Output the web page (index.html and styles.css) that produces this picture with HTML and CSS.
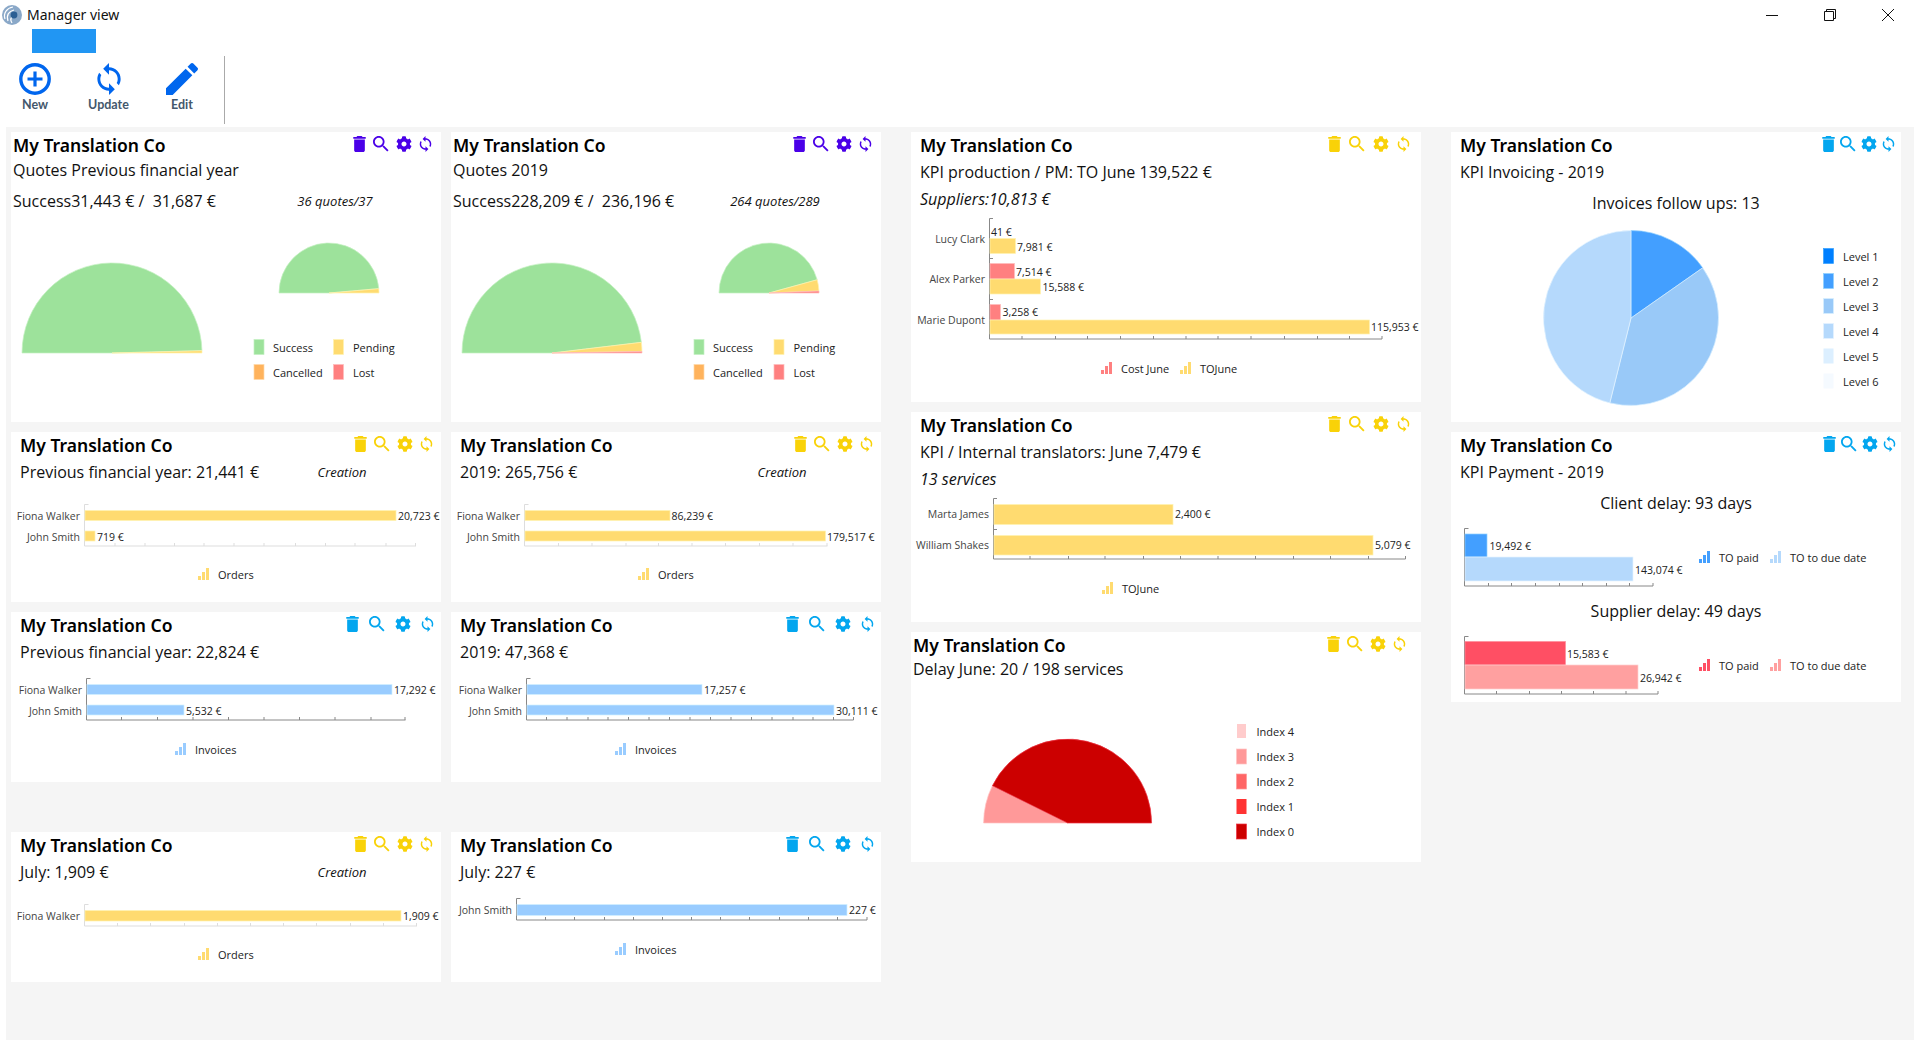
FILE: index.html
```html
<!DOCTYPE html>
<html lang="en">
<head>
    <meta charset="UTF-8">
    <title>Manager view</title>
    <link rel="stylesheet" href="styles.css">
</head>
<body>
    <svg class="icon-defs" aria-hidden="true">
        <symbol id="i-trash" viewBox="5 3 14 18"><path d="M6 19c0 1.1.9 2 2 2h8c1.1 0 2-.9 2-2V7H6v12zM19 4h-3.5l-1-1h-5l-1 1H5v2h14V4z"/></symbol>
        <symbol id="i-search" viewBox="3 3 18 18"><path d="M15.5 14h-.79l-.28-.27C15.41 12.59 16 11.11 16 9.5 16 5.91 13.09 3 9.5 3S3 5.91 3 9.5 5.91 16 9.5 16c1.61 0 3.09-.59 4.23-1.57l.27.28v.79l5 4.99L20.49 19l-4.99-5zm-6 0C7.01 14 5 11.99 5 9.5S7.01 5 9.5 5 14 7.01 14 9.5 11.99 14 9.5 14z"/></symbol>
        <symbol id="i-cog" viewBox="0 0 512 512"><path d="M487.4 315.7l-42.6-24.6c4.3-23.2 4.3-47 0-70.2l42.6-24.6c4.9-2.8 7.1-8.6 5.5-14-11.1-35.6-30-67.8-54.7-94.6-3.8-4.1-10-5.1-14.8-2.3L380.8 110c-17.9-15.4-38.5-27.3-60.8-35.1V25.8c0-5.6-3.9-10.5-9.4-11.7-36.7-8.2-74.3-7.8-109.2 0-5.5 1.2-9.4 6.1-9.4 11.7V75c-22.2 7.9-42.8 19.8-60.8 35.1L88.7 85.5c-4.9-2.8-11-1.9-14.8 2.3-24.7 26.7-43.6 58.9-54.7 94.6-1.7 5.4.6 11.2 5.5 14L67.3 221c-4.3 23.2-4.3 47 0 70.2l-42.6 24.6c-4.9 2.8-7.1 8.6-5.5 14 11.1 35.6 30 67.8 54.7 94.6 3.8 4.1 10 5.1 14.8 2.3l42.6-24.6c17.9 15.4 38.5 27.3 60.8 35.1v49.2c0 5.6 3.9 10.5 9.4 11.7 36.7 8.2 74.3 7.8 109.2 0 5.5-1.2 9.4-6.1 9.4-11.7v-49.2c22.2-7.9 42.8-19.8 60.8-35.1l42.6 24.6c4.9 2.8 11 1.9 14.8-2.3 24.7-26.7 43.6-58.9 54.7-94.6 1.5-5.5-.7-11.3-5.6-14.1zM256 336c-44.1 0-80-35.9-80-80s35.9-80 80-80 80 35.9 80 80-35.9 80-80 80z"/></symbol>
        <symbol id="i-sync" viewBox="3 1 18 22"><path d="M12 4V1L8 5l4 4V6c3.31 0 6 2.69 6 6 0 1.01-.25 1.97-.7 2.8l1.46 1.46C19.54 15.03 20 13.57 20 12c0-4.42-3.58-8-8-8zm0 14c-3.31 0-6-2.69-6-6 0-1.01.25-1.97.7-2.8L5.24 7.74C4.46 8.97 4 10.43 4 12c0 4.42 3.58 8 8 8v3l4-4-4-4v3z"/></symbol>
        <symbol id="i-edit" viewBox="3 3 18 18"><path d="M3 17.25V21h3.75L17.81 9.94l-3.75-3.75L3 17.25zM20.71 7.04c.39-.39.39-1.02 0-1.41l-2.34-2.34c-.39-.39-1.02-.39-1.41 0l-1.83 1.83 3.75 3.75 1.83-1.83z"/></symbol>
        <symbol id="i-bars" viewBox="0 0 11 12"><path d="M0 8h3v4H0zM4 4h3v8H4zM8 0h3v12H8z"/></symbol>
    </svg>

    <header class="titlebar">
        <svg class="logo" viewBox="0 0 20 20">
            <circle cx="10" cy="10" r="10" fill="#8aa8c8"/>
            <path d="M3 14C1 8 5 3 11 2M6 16C4 10 7 6 12 5M10 18c-2-3-1-6 2-8" fill="none" stroke="#fff" stroke-width="1.2"/>
            <circle cx="12" cy="10" r="3.4" fill="#2c5f94"/>
        </svg>
        <span class="titlebar-text">Manager view</span>
        <div class="window-buttons">
            <svg width="12" height="12" viewBox="0 0 12 12"><path d="M0 6.5h12" stroke="#111"/></svg>
            <svg width="12" height="12" viewBox="0 0 12 12"><path d="M.5 2.5h9v9h-9zM2.5 2.5v-2h9v9h-2" fill="none" stroke="#111"/></svg>
            <svg width="12" height="12" viewBox="0 0 12 12"><path d="M0 0l12 12M12 0L0 12" stroke="#111"/></svg>
        </div>
    </header>
    <div class="tab-marker"></div>
    <nav class="toolbar">
        <div class="tool">
            <svg width="32" height="32" viewBox="0 0 32 32"><circle cx="16" cy="16" r="14.2" fill="none" stroke="currentColor" stroke-width="3.4"/><path d="M16 8.5v15M8.5 16h15" stroke="currentColor" stroke-width="3.2"/></svg>
            <span>New</span>
        </div>
        <div class="tool">
            <svg width="32" height="32"><use href="#i-sync"/></svg>
            <span>Update</span>
        </div>
        <div class="tool">
            <svg width="32" height="32"><use href="#i-edit"/></svg>
            <span>Edit</span>
        </div>
        <div class="toolbar-sep"></div>
    </nav>

    <!-- chart viewBoxes use page pixels, so each svg starts where it sits on screen -->
    <main class="board">
        <section class="col col-small">
            <article class="card card-tight h-290">
                <div class="card-head">
                    <h2>My Translation Co</h2>
                    <div class="tools purple">
                        <svg class="ic-trash"><use href="#i-trash"/></svg><svg class="ic"><use href="#i-search"/></svg><svg class="ic"><use href="#i-cog"/></svg><svg class="ic-sync"><use href="#i-sync"/></svg>
                    </div>
                </div>
                <p class="line">Quotes Previous financial year</p>
                <div class="line-row gap-7"><p class="line lead">Success31,443 € /&nbsp; 31,687 €</p><p class="note">36 quotes/37</p></div>
                <svg class="chart" width="430" height="209" viewBox="11 213 430 209">
                    <path class="ok" d="M22 353A90 90 0 0 1 201.97 350.64L112 353Z"/>
                    <path class="pend" d="M201.97 350.64A90 90 0 0 1 202 353L112 353Z"/>
                    <path class="ok" d="M279 293A50 50 0 0 1 378.81 288.64L329 293Z"/>
                    <path class="pend" d="M378.81 288.64A50 50 0 0 1 379 293L329 293Z"/>
                    <rect class="ok" x="254" y="339.5" width="10" height="15"/><text x="273" y="347">Success</text>
                    <rect class="pend" x="333.5" y="339.5" width="10" height="15"/><text x="353" y="347">Pending</text>
                    <rect class="canc" x="254" y="364.5" width="10" height="15"/><text x="273" y="372">Cancelled</text>
                    <rect class="lost" x="333.5" y="364.5" width="10" height="15"/><text x="353" y="372">Lost</text>
                </svg>
            </article>
            <article class="card h-170">
                <div class="card-head">
                    <h2>My Translation Co</h2>
                    <div class="tools tools-orders gold">
                        <svg class="ic-trash"><use href="#i-trash"/></svg><svg class="ic"><use href="#i-search"/></svg><svg class="ic"><use href="#i-cog"/></svg><svg class="ic-sync"><use href="#i-sync"/></svg>
                    </div>
                </div>
                <div class="line-row gap-2"><p class="line lead">Previous financial year: 21,441 €</p><p class="note">Creation</p></div>
                <svg class="chart" width="430" height="118" viewBox="11 484 430 118">
                    <path class="axis-light" d="M88.5 504.5h-4v41.5h331.5M115 543v3M145 543v3M174.5 543v3M204 543v3M234 543v3M264 543v3M295.5 543v3M325.5 543v3M355 543v3M386 543v3M415.5 543v3"/>
                    <rect class="pend" x="85" y="510.5" width="311" height="10"/><rect class="pend" x="85" y="531" width="10" height="10"/>
                    <text class="name" x="80" y="516">Fiona Walker</text><text class="name" x="80" y="537">John Smith</text>
                    <text class="val" x="398" y="516">20,723 €</text><text class="val" x="97" y="537">719 €</text>
                    <use class="pend-f" href="#i-bars" x="198" y="568" width="11" height="12"/><text x="218" y="574">Orders</text>
                </svg>
            </article>
            <article class="card h-170">
                <div class="card-head">
                    <h2>My Translation Co</h2>
                    <div class="tools tools-wide blue">
                        <svg class="ic-trash"><use href="#i-trash"/></svg><svg class="ic"><use href="#i-search"/></svg><svg class="ic"><use href="#i-cog"/></svg><svg class="ic-sync"><use href="#i-sync"/></svg>
                    </div>
                </div>
                <div class="line-row gap-2"><p class="line lead">Previous financial year: 22,824 €</p></div>
                <svg class="chart" width="430" height="118" viewBox="11 664 430 118">
                    <path class="axis" d="M90.5 678.5h-4v41.5h319M121.5 717v3M157.5 717v3M193 717v3M228.5 717v3M264 717v3M299.5 717v3M335 717v3M371 717v3M405 717v3"/>
                    <rect class="inv" x="87" y="684.5" width="305" height="10"/><rect class="inv" x="87" y="705" width="97" height="10"/>
                    <text class="name" x="82" y="690">Fiona Walker</text><text class="name" x="82" y="711">John Smith</text>
                    <text class="val" x="394" y="690">17,292 €</text><text class="val" x="186" y="711">5,532 €</text>
                    <use class="inv-f" href="#i-bars" x="175" y="743" width="11" height="12"/><text x="195" y="749">Invoices</text>
                </svg>
            </article>
            <article class="card card-late h-150">
                <div class="card-head">
                    <h2>My Translation Co</h2>
                    <div class="tools tools-orders gold">
                        <svg class="ic-trash"><use href="#i-trash"/></svg><svg class="ic"><use href="#i-search"/></svg><svg class="ic"><use href="#i-cog"/></svg><svg class="ic-sync"><use href="#i-sync"/></svg>
                    </div>
                </div>
                <div class="line-row gap-2"><p class="line lead">July: 1,909 €</p><p class="note">Creation</p></div>
                <svg class="chart" width="430" height="98" viewBox="11 884 430 98">
                    <path class="axis-light" d="M88.5 904.5h-4v21.5h332.5M117.5 923v3M150.5 923v3M184.5 923v3M217.5 923v3M250.5 923v3M283.5 923v3M316.5 923v3M350.5 923v3M383.5 923v3M416.5 923v3"/>
                    <rect class="pend" x="85" y="910.5" width="316" height="10.5"/>
                    <text class="name" x="80" y="916">Fiona Walker</text>
                    <text class="val" x="403" y="916">1,909 €</text>
                    <use class="pend-f" href="#i-bars" x="198" y="948" width="11" height="12"/><text x="218" y="954">Orders</text>
                </svg>
            </article>
        </section>

        <section class="col col-small">
            <article class="card card-tight h-290">
                <div class="card-head">
                    <h2>My Translation Co</h2>
                    <div class="tools purple">
                        <svg class="ic-trash"><use href="#i-trash"/></svg><svg class="ic"><use href="#i-search"/></svg><svg class="ic"><use href="#i-cog"/></svg><svg class="ic-sync"><use href="#i-sync"/></svg>
                    </div>
                </div>
                <p class="line">Quotes 2019</p>
                <div class="line-row gap-7"><p class="line lead">Success228,209 € /&nbsp; 236,196 €</p><p class="note">264 quotes/289</p></div>
                <svg class="chart" width="430" height="209" viewBox="451 213 430 209">
                    <path class="ok" d="M462 353A90 90 0 0 1 641.37 342.34L552 353Z"/>
                    <path class="pend" d="M641.37 342.34A90 90 0 0 1 641.99 351.43L552 353Z"/>
                    <path class="lost" d="M641.99 351.43A90 90 0 0 1 642 353L552 353Z"/>
                    <path class="ok" d="M719 293A50 50 0 0 1 817.2 279.72L769 293Z"/>
                    <path class="pend" d="M817.2 279.72A50 50 0 0 1 818.96 291L769 293Z"/>
                    <path class="lost" d="M818.96 291A50 50 0 0 1 819 293L769 293Z"/>
                    <rect class="ok" x="694" y="339.5" width="10" height="15"/><text x="713" y="347">Success</text>
                    <rect class="pend" x="774" y="339.5" width="10" height="15"/><text x="793.5" y="347">Pending</text>
                    <rect class="canc" x="694" y="364.5" width="10" height="15"/><text x="713" y="372">Cancelled</text>
                    <rect class="lost" x="774" y="364.5" width="10" height="15"/><text x="793.5" y="372">Lost</text>
                </svg>
            </article>
            <article class="card h-170">
                <div class="card-head">
                    <h2>My Translation Co</h2>
                    <div class="tools tools-orders gold">
                        <svg class="ic-trash"><use href="#i-trash"/></svg><svg class="ic"><use href="#i-search"/></svg><svg class="ic"><use href="#i-cog"/></svg><svg class="ic-sync"><use href="#i-sync"/></svg>
                    </div>
                </div>
                <div class="line-row gap-2"><p class="line lead">2019: 265,756 €</p><p class="note">Creation</p></div>
                <svg class="chart" width="430" height="118" viewBox="451 484 430 118">
                    <path class="axis-light" d="M528.5 504.5h-4v41.5h303M558.5 543v3M592 543v3M626 543v3M658.5 543v3M692 543v3M725.5 543v3M759.5 543v3M793 543v3M827 543v3"/>
                    <rect class="pend" x="525" y="510.5" width="145" height="10"/><rect class="pend" x="525" y="531" width="300.5" height="10"/>
                    <text class="name" x="520" y="516">Fiona Walker</text><text class="name" x="520" y="537">John Smith</text>
                    <text class="val" x="671.5" y="516">86,239 €</text><text class="val" x="827" y="537">179,517 €</text>
                    <use class="pend-f" href="#i-bars" x="638" y="568" width="11" height="12"/><text x="658" y="574">Orders</text>
                </svg>
            </article>
            <article class="card h-170">
                <div class="card-head">
                    <h2>My Translation Co</h2>
                    <div class="tools tools-wide blue">
                        <svg class="ic-trash"><use href="#i-trash"/></svg><svg class="ic"><use href="#i-search"/></svg><svg class="ic"><use href="#i-cog"/></svg><svg class="ic-sync"><use href="#i-sync"/></svg>
                    </div>
                </div>
                <div class="line-row gap-2"><p class="line lead">2019: 47,368 €</p></div>
                <svg class="chart" width="430" height="118" viewBox="451 664 430 118">
                    <path class="axis" d="M530.5 678.5h-4v41.5h327M546.5 717v3M567 717v3M588 717v3M608 717v3M628.5 717v3M649 717v3M669.5 717v3M690 717v3M710.5 717v3M731 717v3M751.5 717v3M772 717v3M793 717v3M813 717v3M833.5 717v3M853.5 717v3"/>
                    <rect class="inv" x="527" y="684.5" width="175" height="10"/><rect class="inv" x="527" y="705" width="307" height="10"/>
                    <text class="name" x="522" y="690">Fiona Walker</text><text class="name" x="522" y="711">John Smith</text>
                    <text class="val" x="704" y="690">17,257 €</text><text class="val" x="836" y="711">30,111 €</text>
                    <use class="inv-f" href="#i-bars" x="615" y="743" width="11" height="12"/><text x="635" y="749">Invoices</text>
                </svg>
            </article>
            <article class="card card-late h-150">
                <div class="card-head">
                    <h2>My Translation Co</h2>
                    <div class="tools tools-wide blue">
                        <svg class="ic-trash"><use href="#i-trash"/></svg><svg class="ic"><use href="#i-search"/></svg><svg class="ic"><use href="#i-cog"/></svg><svg class="ic-sync"><use href="#i-sync"/></svg>
                    </div>
                </div>
                <div class="line-row gap-2"><p class="line lead">July: 227 €</p></div>
                <svg class="chart" width="430" height="98" viewBox="451 884 430 98">
                    <path class="axis" d="M520.5 898.5h-4v21.5h350.5M545.5 917v3M574.5 917v3M604.5 917v3M633.5 917v3M662.5 917v3M691.5 917v3M720.5 917v3M749.5 917v3M779.5 917v3M808.5 917v3M837.5 917v3M867 917v3"/>
                    <rect class="inv" x="517" y="904.5" width="330" height="11"/>
                    <text class="name" x="512" y="910">John Smith</text>
                    <text class="val" x="849" y="910">227 €</text>
                    <use class="inv-f" href="#i-bars" x="615" y="943" width="11" height="12"/><text x="635" y="949">Invoices</text>
                </svg>
            </article>
        </section>

        <section class="col col-mid">
            <article class="card h-270">
                <div class="card-head">
                    <h2>My Translation Co</h2>
                    <div class="tools tools-mid gold">
                        <svg class="ic-trash"><use href="#i-trash"/></svg><svg class="ic"><use href="#i-search"/></svg><svg class="ic"><use href="#i-cog"/></svg><svg class="ic-sync"><use href="#i-sync"/></svg>
                    </div>
                </div>
                <p class="line gap-2">KPI production / PM: TO June 139,522 €</p>
                <p class="line gap-3"><em>Suppliers:10,813 €</em></p>
                <svg class="chart" width="510" height="191" viewBox="911 211 510 191">
                    <path class="axis" d="M993 218.5h-3.500v120.500h392.500M989.5 258.5h3.500M989.5 299.5h3.500M1022 336v3M1055.5 336v3M1087.5 336v3M1120.5 336v3M1153.5 336v3M1186 336v3M1218 336v3M1251 336v3M1284.5 336v3M1317.5 336v3M1349.5 336v3M1382 336v3"/>
                    <rect class="pend" x="990" y="238.5" width="25.5" height="15"/>
                    <rect class="lost" x="990" y="263.5" width="24.5" height="15.5"/>
                    <rect class="pend" x="990" y="279" width="50.5" height="15"/>
                    <rect class="lost" x="990" y="304.5" width="10.5" height="15.5"/>
                    <rect class="pend" x="990" y="320" width="379.5" height="14"/>
                    <text class="name" x="985" y="239">Lucy Clark</text><text class="name" x="985" y="279">Alex Parker</text><text class="name" x="985" y="320">Marie Dupont</text>
                    <text class="val" x="991" y="232">41 €</text><text class="val" x="1017" y="247">7,981 €</text>
                    <text class="val" x="1016" y="272">7,514 €</text><text class="val" x="1042.5" y="287">15,588 €</text>
                    <text class="val" x="1002.5" y="312">3,258 €</text><text class="val" x="1371" y="327">115,953 €</text>
                    <use class="lost-f" href="#i-bars" x="1101" y="362" width="11" height="12"/><text x="1121" y="368">Cost June</text>
                    <use class="pend-f" href="#i-bars" x="1180" y="362" width="11" height="12"/><text x="1200" y="368">TOJune</text>
                </svg>
            </article>
            <article class="card h-210">
                <div class="card-head">
                    <h2>My Translation Co</h2>
                    <div class="tools tools-mid gold">
                        <svg class="ic-trash"><use href="#i-trash"/></svg><svg class="ic"><use href="#i-search"/></svg><svg class="ic"><use href="#i-cog"/></svg><svg class="ic-sync"><use href="#i-sync"/></svg>
                    </div>
                </div>
                <p class="line gap-2">KPI / Internal translators: June 7,479 €</p>
                <p class="line gap-3"><em>13 services</em></p>
                <svg class="chart" width="510" height="131" viewBox="911 491 510 131">
                    <path class="axis" d="M997 498.5h-3.500v60.500h412M993.5 529.5h3.500M1030 556v3M1068.5 556v3M1105 556v3M1143.5 556v3M1180.5 556v3M1218 556v3M1255.5 556v3M1293.5 556v3M1330.5 556v3M1368.5 556v3M1405.5 556v3"/>
                    <rect class="pend" x="994" y="504.5" width="179" height="20"/>
                    <rect class="pend" x="994" y="535.5" width="379" height="19.5"/>
                    <text class="name" x="989" y="514">Marta James</text><text class="name" x="989" y="545">William Shakes</text>
                    <text class="val" x="1175" y="514">2,400 €</text><text class="val" x="1375" y="545">5,079 €</text>
                    <use class="pend-f" href="#i-bars" x="1102" y="582" width="11" height="12"/><text x="1122" y="588">TOJune</text>
                </svg>
            </article>
            <article class="card card-tight h-230">
                <div class="card-head">
                    <h2>My Translation Co</h2>
                    <div class="tools tools-delay gold">
                        <svg class="ic-trash"><use href="#i-trash"/></svg><svg class="ic"><use href="#i-search"/></svg><svg class="ic"><use href="#i-cog"/></svg><svg class="ic-sync"><use href="#i-sync"/></svg>
                    </div>
                </div>
                <p class="line shift-up">Delay June: 20 / 198 services</p>
                <svg class="chart" width="510" height="181" viewBox="911 681 510 181">
                    <path class="delay-3" d="M983.6 823A84 84 0 0 1 992.4 785.7L1067.6 823Z"/>
                    <path class="delay-0" d="M992.4 785.7A84 84 0 0 1 1151.6 823L1067.6 823Z"/>
                    <rect class="delay-4" x="1237" y="724" width="9" height="14"/><text x="1256.5" y="731">Index 4</text>
                    <rect class="delay-3" x="1236.5" y="749" width="10" height="15"/><text x="1256.5" y="756">Index 3</text>
                    <rect class="delay-2" x="1236.5" y="774" width="10" height="15"/><text x="1256.5" y="781">Index 2</text>
                    <rect class="delay-1" x="1236.5" y="799" width="10" height="15"/><text x="1256.5" y="806">Index 1</text>
                    <rect class="delay-0" x="1236.5" y="824" width="10" height="15"/><text x="1256.5" y="831">Index 0</text>
                </svg>
            </article>
        </section>

        <section class="col col-wide">
            <article class="card h-290">
                <div class="card-head">
                    <h2>My Translation Co</h2>
                    <div class="tools tools-kpi blue">
                        <svg class="ic-trash"><use href="#i-trash"/></svg><svg class="ic"><use href="#i-search"/></svg><svg class="ic"><use href="#i-cog"/></svg><svg class="ic-sync"><use href="#i-sync"/></svg>
                    </div>
                </div>
                <p class="line gap-2">KPI Invoicing - 2019</p>
                <p class="line gap-7 centered">Invoices follow ups: 13</p>
                <svg class="chart" width="450" height="207" viewBox="1451 215 450 207">
                    <path class="level-2" d="M1631 318L1631 230.5A87.5 87.5 0 0 1 1702.7 267.8Z"/>
                    <path class="level-3" d="M1631 318L1702.7 267.8A87.5 87.5 0 0 1 1609.8 402.9Z"/>
                    <path class="level-4" d="M1631 318L1609.8 402.9A87.5 87.5 0 0 1 1631 230.5Z"/>
                    <rect class="level-1" x="1823.5" y="248.5" width="10" height="15"/><text x="1843" y="256">Level 1</text>
                    <rect class="level-2" x="1823.5" y="273.5" width="10" height="15"/><text x="1843" y="281">Level 2</text>
                    <rect class="level-3" x="1823.5" y="298.5" width="10" height="15"/><text x="1843" y="306">Level 3</text>
                    <rect class="level-4" x="1823.5" y="323.5" width="10" height="15"/><text x="1843" y="331">Level 4</text>
                    <rect class="level-5" x="1823.5" y="348.5" width="10" height="15"/><text x="1843" y="356">Level 5</text>
                    <rect class="level-6" x="1823.5" y="373.5" width="10" height="15"/><text x="1843" y="381">Level 6</text>
                </svg>
            </article>
            <article class="card h-270">
                <div class="card-head">
                    <h2>My Translation Co</h2>
                    <div class="tools tools-kpi tools-pay blue">
                        <svg class="ic-trash"><use href="#i-trash"/></svg><svg class="ic"><use href="#i-search"/></svg><svg class="ic"><use href="#i-cog"/></svg><svg class="ic-sync"><use href="#i-sync"/></svg>
                    </div>
                </div>
                <p class="line gap-2">KPI Payment - 2019</p>
                <p class="line gap-7 centered">Client delay: 93 days</p>
                <svg class="chart" width="450" height="84" viewBox="1451 515 450 84">
                    <path class="axis" d="M1468.5 528.5h-4v57.500h188.500M1488.5 583v3M1511.5 583v3M1535.5 583v3M1559.5 583v3M1582.5 583v3M1606.5 583v3M1629.5 583v3M1653 583v3"/>
                    <rect class="level-2" x="1465" y="534" width="22" height="23"/>
                    <rect class="level-4" x="1465" y="557" width="168" height="24"/>
                    <text class="val" x="1489.5" y="546">19,492 €</text><text class="val" x="1635" y="570">143,074 €</text>
                    <use class="paid-f" href="#i-bars" x="1699" y="551" width="11" height="12"/><text x="1719" y="557">TO paid</text>
                    <use class="due-f" href="#i-bars" x="1770" y="551" width="11" height="12"/><text x="1790" y="557">TO to due date</text>
                </svg>
                <p class="line centered">Supplier delay: 49 days</p>
                <svg class="chart" width="450" height="79" viewBox="1451 623 450 79">
                    <path class="axis" d="M1468.5 636.5h-4v57.500h193.500M1496.5 691v3M1529.5 691v3M1561.5 691v3M1593.5 691v3M1626 691v3M1658 691v3"/>
                    <rect class="sup-paid" x="1465" y="641.5" width="100.5" height="23.5"/>
                    <rect class="sup-due" x="1465" y="665" width="173" height="24"/>
                    <text class="val" x="1567" y="654">15,583 €</text><text class="val" x="1640" y="678">26,942 €</text>
                    <use class="sup-paid-f" href="#i-bars" x="1699" y="659" width="11" height="12"/><text x="1719" y="665">TO paid</text>
                    <use class="sup-due-f" href="#i-bars" x="1770" y="659" width="11" height="12"/><text x="1790" y="665">TO to due date</text>
                </svg>
            </article>
        </section>
    </main>
</body>
</html>
```

FILE: styles.css
```css
* {
    box-sizing: border-box;
}

html, body {
    margin: 0;
    height: 1040px;
    overflow: hidden;
    background: #fff;
}

body {
    font-family: "Open Sans", "Noto Sans", sans-serif;
    color: #111;
}

.icon-defs {
    display: none;
}

/* window chrome */
.titlebar {
    display: flex;
    align-items: center;
    height: 29px;
    padding-left: 2px;
}

.logo {
    width: 20px;
    height: 20px;
}

.titlebar-text {
    margin-left: 5px;
    font-family: "Noto Sans", sans-serif;
    font-size: 14px;
}

.window-buttons {
    display: flex;
    gap: 46px;
    margin-left: auto;
    margin-right: 26px;
}

.window-buttons svg {
    display: block;
}

.tab-marker {
    width: 64px;
    height: 24px;
    margin-left: 32px;
    background: #2196f3;
}

.toolbar {
    display: flex;
    gap: 13.5px;
    height: 74px;
    padding: 3px 0 3px 5px;
}

.tool {
    display: flex;
    flex-direction: column;
    align-items: center;
    width: 60px;
    padding-top: 7px;
    color: #0066ee;
}

.tool svg {
    fill: currentColor;
}

.tool span {
    font-family: "Lato", sans-serif;
    font-size: 12.5px;
    font-weight: 700;
    line-height: 20px;
    color: #44586c;
}

.toolbar-sep {
    width: 1px;
    margin-left: -1.5px;
    background: #aaa;
}

/* dashboard */
.board {
    display: flex;
    height: 913px;
    width: 1908px;
    margin-left: 6px;
    padding: 5px;
    background: #f5f5f5;
}

.col {
    display: flex;
    flex-direction: column;
    gap: 10px;
}

.col-small {
    width: 430px;
    margin-right: 10px;
}

.col-mid {
    width: 510px;
    margin-left: 20px;
    margin-right: 30px;
}

.col-wide {
    width: 450px;
}

.card {
    flex: none;
    padding-left: 9px;
    background: #fff;
}

.card-tight {
    padding-left: 2px;
}

.card-late {
    margin-top: 40px;
}

.h-150 { height: 150px; }
.h-170 { height: 170px; }
.h-210 { height: 210px; }
.h-230 { height: 230px; }
.h-270 { height: 270px; }
.h-290 { height: 290px; }

.card-head {
    display: flex;
    justify-content: space-between;
    height: 26px;
}

.card-head h2 {
    margin: 0;
    font-family: "Noto Sans", sans-serif;
    font-size: 17.5px;
    font-weight: 600;
    line-height: 26px;
    color: #000;
}

.tools {
    display: flex;
    gap: 7px;
    align-items: flex-start;
    padding-top: 4px;
    margin-right: 9px;
}

.tools-orders {
    margin-right: 8px;
}

.tools-wide {
    gap: 10px;
    margin-right: 7px;
}

.tools-mid {
    gap: 8px;
    margin-right: 11px;
}

.tools-delay {
    margin-right: 15px;
}

.tools-kpi {
    gap: 5px;
    margin-right: 6px;
}

.tools-pay {
    margin-right: 5px;
}

.tools svg {
    fill: currentColor;
    display: block;
}

.ic-trash {
    width: 13px;
    height: 16px;
}

.ic {
    width: 16px;
    height: 16px;
}

.ic-sync {
    width: 13px;
    height: 16px;
}

.purple { color: #4a00e8; }
.gold { color: #f9d208; }
.blue { color: #03a6ef; }

.line {
    margin: 0;
    font-size: 16px;
    line-height: 24px;
    white-space: nowrap;
}

.line-row {
    display: flex;
    align-items: center;
}

.lead {
    width: 262px;
}

.note {
    width: 120px;
    margin: 0;
    font-size: 13px;
    font-style: italic;
    text-align: center;
}

.gap-2 { margin-top: 2px; }
.gap-3 { margin-top: 3px; }
.gap-7 { margin-top: 7px; }

.shift-up {
    margin-top: -1px;
}

.centered {
    margin-left: -9px;
    text-align: center;
}

/* charts */
.chart {
    display: block;
    margin-left: -9px;
}

.card-tight .chart {
    margin-left: -2px;
}

.chart text {
    font-size: 11px;
    fill: #222;
    dominant-baseline: central;
}

.chart .val {
    font-size: 10.5px;
}

.chart .name {
    font-size: 10.5px;
    text-anchor: end;
    fill: #444;
}

.axis, .axis-light {
    fill: none;
    stroke: #888;
}

.axis-light {
    stroke: #ddd;
}

.ok { fill: #9de29b; stroke: #c4f0c2; stroke-width: .7; }
.pend { fill: #ffdb70; stroke: #fff3b0; stroke-width: .7; }
.canc { fill: #ffb35c; stroke: #ffd9a8; stroke-width: .7; }
.lost { fill: #ff8080; stroke: #ffbcbc; stroke-width: .7; }
.inv { fill: #99ccff; stroke: #d0f0ff; stroke-width: .7; }

.pend-f { fill: #ffdb70; }
.lost-f { fill: #ff8080; }
.inv-f { fill: #99ccff; }
.paid-f { fill: #439fff; }
.due-f { fill: #b5d9fc; }
.sup-paid-f { fill: #ff4f64; }
.sup-due-f { fill: #ffa0a0; }

.sup-paid { fill: #ff4f64; stroke: #ff8f9c; stroke-width: .7; }
.sup-due { fill: #ffa0a0; stroke: #ffd0d0; stroke-width: .7; }

.delay-0 { fill: #cc0000; stroke: #ee3344; stroke-width: .7; }
.delay-1 { fill: #ff3333; }
.delay-2 { fill: #ff6666; stroke: #ff9999; stroke-width: .7; }
.delay-3 { fill: #ff9999; stroke: #ffc4c4; stroke-width: .7; }
.delay-4 { fill: #ffcccc; }

.level-1 { fill: #007fff; stroke: #33a0ff; stroke-width: .7; }
.level-2 { fill: #439fff; stroke: #8fd0ff; stroke-width: .7; }
.level-3 { fill: #99c9f8; stroke: #d8efff; stroke-width: .7; }
.level-4 { fill: #b5d9fc; stroke: #e4f3ff; stroke-width: .7; }
.level-5 { fill: #dcefff; }
.level-6 { fill: #f5faff; }
```
